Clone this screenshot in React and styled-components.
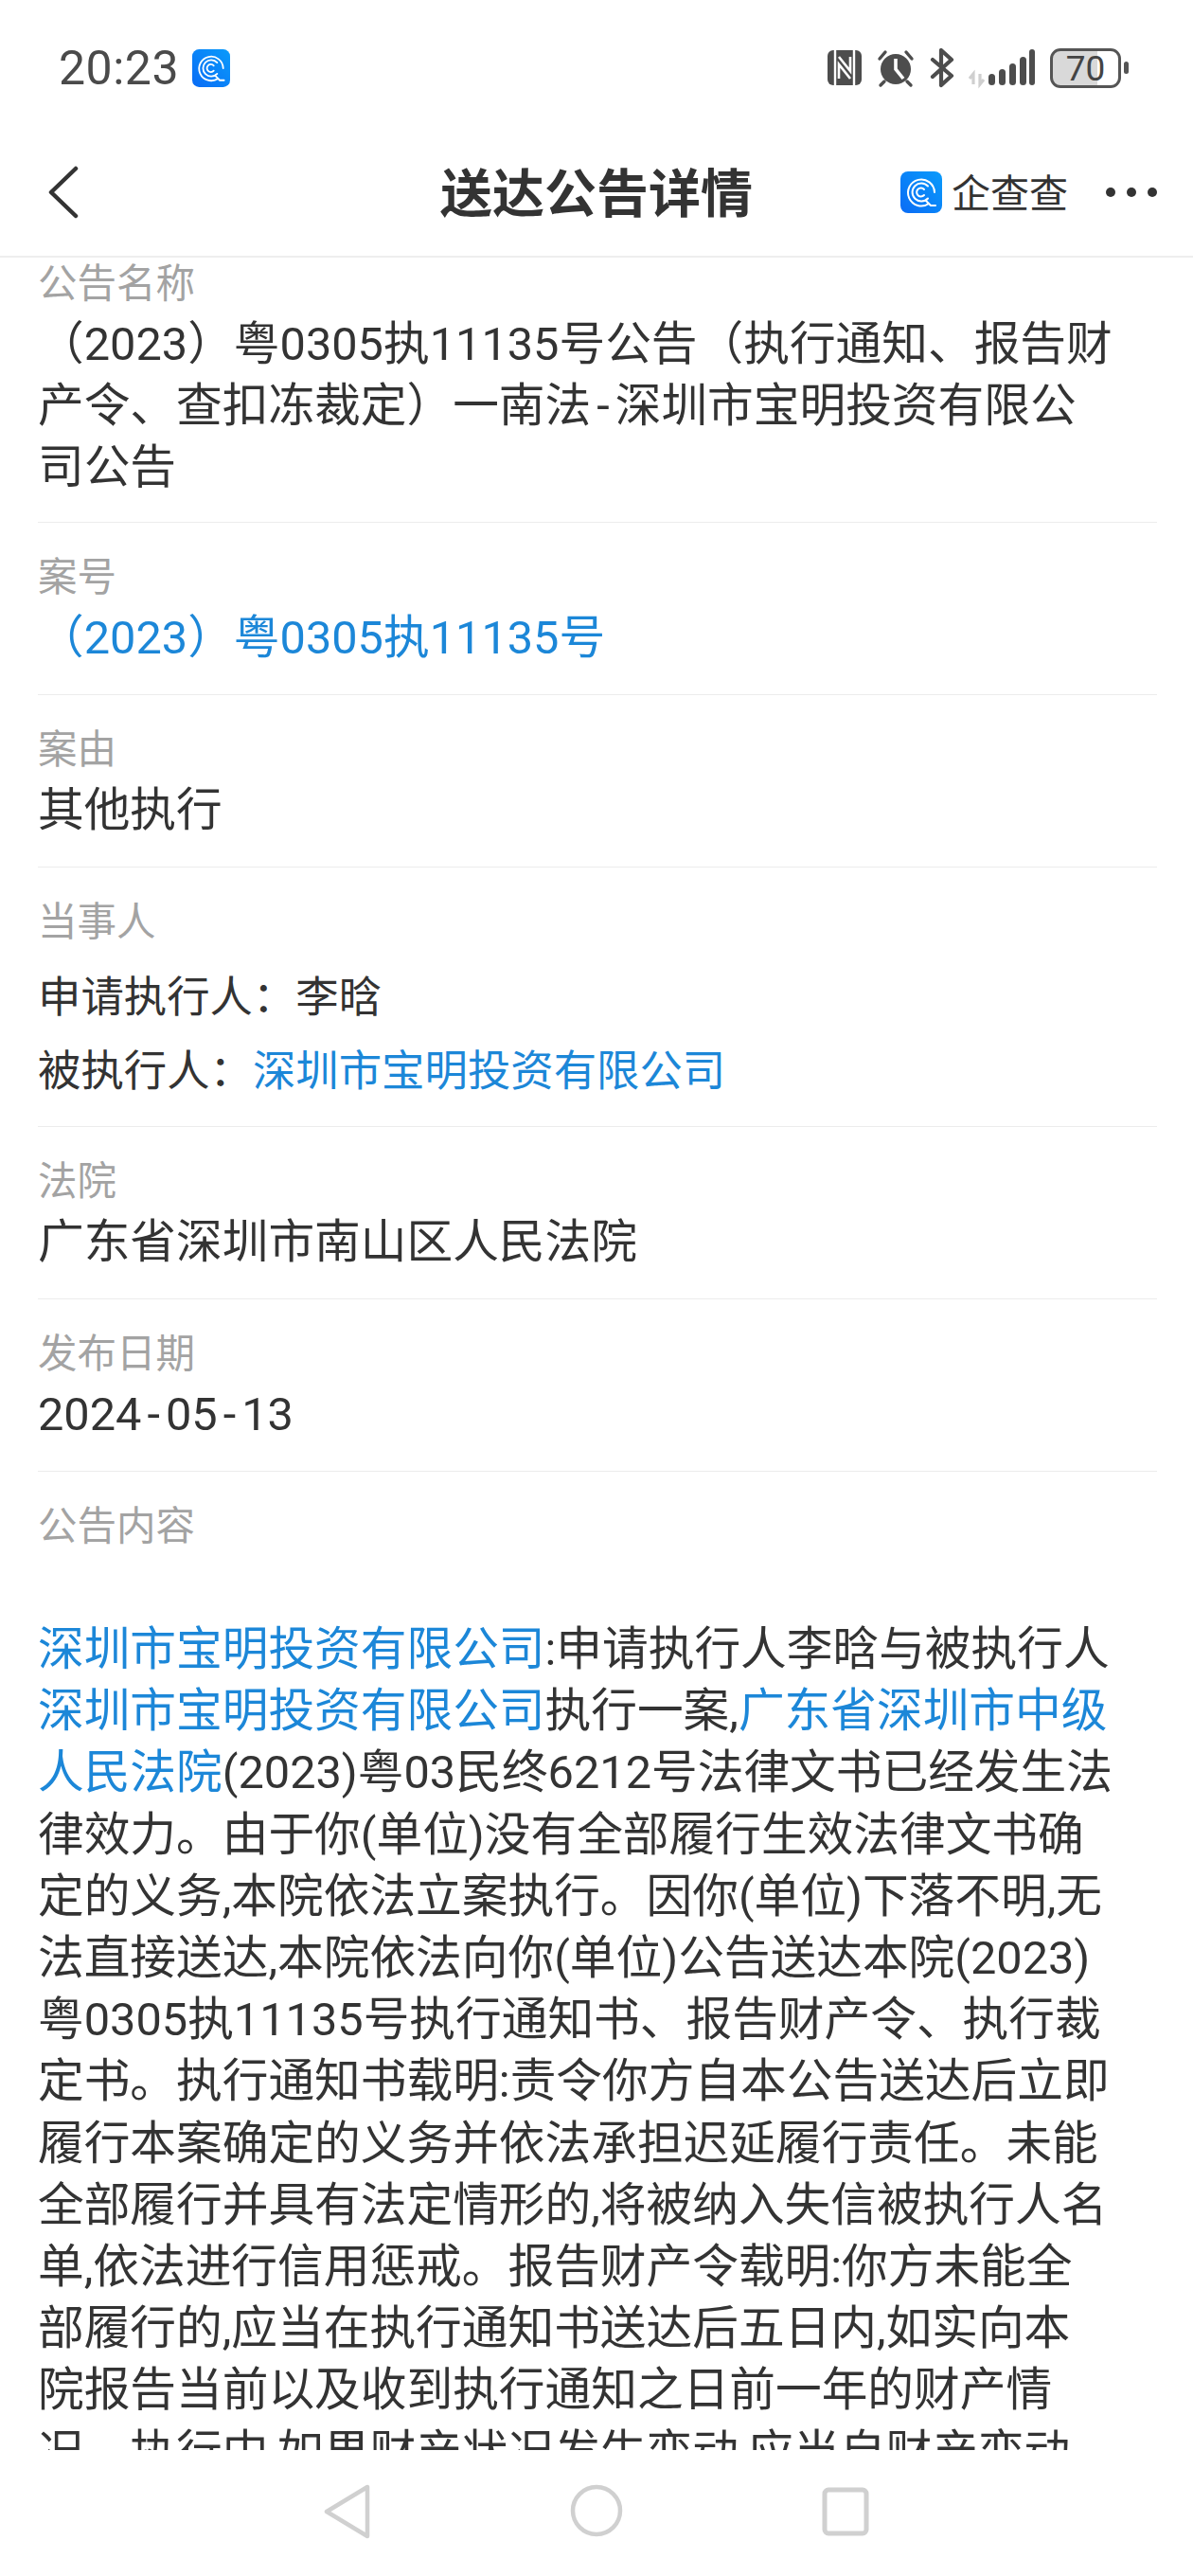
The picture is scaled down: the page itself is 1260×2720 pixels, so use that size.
import React from 'react';
import styled, { createGlobalStyle } from 'styled-components';

const Global = createGlobalStyle`
  html, body { margin: 0; padding: 0; background: #fff; }
  body { font-family: "Roboto", "Noto Sans CJK SC", "Noto Sans", sans-serif; }
`;

const Phone = styled.div`
  width: 1260px;
  height: 2720px;
  display: flex;
  flex-direction: column;
  overflow: hidden;
  background: #fff;
`;

const StatusBar = styled.div`
  height: 136px;
  flex: none;
  box-sizing: border-box;
  padding: 51px 68px 0 62px;
  display: flex;
  align-items: flex-start;
  justify-content: space-between;
`;

const StatusLeft = styled.div`
  display: flex;
  align-items: center;
  gap: 14px;
`;

const Time = styled.span`
  font-size: 50px;
  line-height: 42px;
  color: #4a4a4a;
  letter-spacing: 0.5px;
`;

const StatusRight = styled.div`
  display: flex;
  align-items: flex-start;
  height: 44px;
`;

const TitleBar = styled.header`
  height: 136px;
  flex: none;
  box-sizing: border-box;
  border-bottom: 2px solid #eeeeee;
  padding: 0 37px 0 50px;
  display: flex;
  align-items: center;
  position: relative;
`;

const Title = styled.h1`
  position: absolute;
  left: 0;
  right: 0;
  top: 34px;
  margin: 0;
  text-align: center;
  font-family: "Noto Sans CJK SC", sans-serif;
  font-size: 55px;
  line-height: 60px;
  font-weight: 700;
  color: #333;
  pointer-events: none;
`;

const Brand = styled.div`
  margin-left: auto;
  margin-right: 39px;
  display: flex;
  align-items: center;
  gap: 10px;
`;

const BrandName = styled.span`
  font-family: "Noto Sans CJK SC", sans-serif;
  font-size: 41px;
  line-height: 44px;
  color: #333;
  margin-bottom: 5px;
`;

const Scroller = styled.main`
  flex: 1;
  min-height: 0;
  overflow: hidden;
  padding: 0 38px 0 40px;
`;

const Inner = styled.div`
  margin-top: -5px;
`;

const Section = styled.section`
  padding: ${p => p.$top ?? 26}px 0 ${p => p.$bottom ?? 27}px;
  border-bottom: ${p => (p.$last ? 'none' : '1px solid #ececec')};
`;

const Label = styled.div`
  font-size: 41.5px;
  line-height: 63px;
  color: #a3a3a3;
`;

const Value = styled.div`
  font-size: 48.7px;
  line-height: 65px;
  color: #333;
  white-space: nowrap;
`;

const LinkValue = styled(Value)`
  color: #1c87d8;
`;

const Parties = styled.div`
  margin-top: 10px;
`;

const Party = styled.div`
  font-size: 45.4px;
  line-height: 78px;
  color: #333;
  white-space: nowrap;
`;

const A = styled.span`
  color: #1c87d8;
`;

// the hyphen is drawn wider in the original font
const Hyphen = styled.span`
  padding: 0 6px;
`;

const Body = styled.div`
  margin-top: 66px;
  font-size: 48.7px;
  line-height: 65.2px;
  color: #333;
`;

const Line = styled.div`
  white-space: nowrap;
`;

const NavBar = styled.nav`
  height: 133px;
  flex: none;
  background: #fff;
  display: grid;
  grid-template-columns: repeat(3, 263px);
  justify-content: center;
  justify-items: center;
  align-items: start;
  padding-top: 36px;
  box-sizing: border-box;
`;

const AppLogo = ({ size = 40 }) => (
  <svg width={size} height={size} viewBox="0 0 44 44">
    <defs>
      <linearGradient id="lg" x1="0" y1="1" x2="1" y2="0">
        <stop offset="0" stopColor="#0a6cf5" />
        <stop offset="1" stopColor="#0a9bfb" />
      </linearGradient>
    </defs>
    <rect width="44" height="44" rx="8" fill="url(#lg)" />
    <g fill="none" stroke="#fff" strokeLinecap="round" strokeWidth="2">
      <path d="M30 34 A14 14 0 1 1 36 22" />
      <path d="M29 15.5 A9.5 9.5 0 1 0 29 28.5" />
      <path d="M25 19 A4.5 4.5 0 1 0 25 25" />
      <path d="M27 31 L32 36 L37 36" />
    </g>
  </svg>
);

const StatusIcons = () => (
  <svg width="235" height="44" viewBox="0 0 235 44">
    {/* nfc */}
    <rect x="0" y="2" width="36" height="37" rx="6" fill="#4d4d4d" />
    <path d="M8 2 V39 M28 2 V39" stroke="#fff" strokeWidth="2.4" />
    <path d="M12 9 L24 24 V9 M24 32 L12 17 V32" stroke="#fff" strokeWidth="2.6" fill="none" />
    {/* alarm */}
    <circle cx="72" cy="22" r="16" fill="#4d4d4d" />
    <path d="M72 11 V22 L80 32" stroke="#fff" strokeWidth="3.6" fill="none" />
    <path d="M55 11 L61 4 M83 4 L89 11 M60 35 L56 39 M84 35 L88 39" stroke="#4d4d4d" strokeWidth="3.4" strokeLinecap="round" />
    {/* bluetooth */}
    <path d="M111 12 L131 29 L120 39 V2 L131 12 L111 30" stroke="#4d4d4d" strokeWidth="4.2" strokeLinecap="round" strokeLinejoin="round" fill="none" />
    {/* data arrows */}
    <path d="M154 38 V27 L150 32 M161 27 V38 L165 33" stroke="#cfcfcf" strokeWidth="3.2" fill="none" />
    {/* signal */}
    <rect x="170" y="27" width="7" height="12" rx="3.5" fill="#4d4d4d" />
    <rect x="181" y="22" width="7" height="17" rx="3.5" fill="#4d4d4d" />
    <rect x="192" y="16" width="7" height="23" rx="3.5" fill="#4d4d4d" />
    <rect x="203" y="9" width="7" height="30" rx="3.5" fill="#4d4d4d" />
    <rect x="213" y="1" width="6" height="38" rx="3" fill="#4d4d4d" />
  </svg>
);

const BatteryBox = styled.div`
  width: 75px;
  height: 42px;
  box-sizing: border-box;
  border: 3px solid #555;
  border-radius: 11px;
  overflow: hidden;
  display: flex;
  align-items: center;
  justify-content: center;
  font-size: 37px;
  color: #444;
  background: linear-gradient(90deg, #d9d9d9 0 68%, #fff 68%);
`;

const BatteryCap = styled.div`
  width: 5px;
  height: 13px;
  border-radius: 2.5px;
  background: #555;
  margin: 14px 0 0 3px;
`;

const Chevron = () => (
  <svg width="34" height="56" viewBox="0 0 34 56">
    <path d="M30 3 L4 28 L30 53" fill="none" stroke="#333" strokeWidth="4.5" strokeLinecap="round" strokeLinejoin="round" />
  </svg>
);

const Dots = () => (
  <svg width="56" height="12" viewBox="0 0 56 12">
    <circle cx="6" cy="6" r="5" fill="#333" />
    <circle cx="28" cy="6" r="5" fill="#333" />
    <circle cx="50" cy="6" r="5" fill="#333" />
  </svg>
);

const NavBack = () => (
  <svg width="50" height="58" viewBox="0 0 50 58">
    <path d="M46 3 V55 L3 29 Z" fill="none" stroke="#d0d0d0" strokeWidth="4.5" strokeLinejoin="round" />
  </svg>
);

const NavHome = () => (
  <svg width="56" height="56" viewBox="0 0 56 56">
    <circle cx="28" cy="28" r="25" fill="none" stroke="#d0d0d0" strokeWidth="4.5" />
  </svg>
);

const NavRecent = () => (
  <svg width="50" height="52" viewBox="0 0 50 52" style={{ marginTop: 3 }}>
    <rect x="3" y="3" width="44" height="46" rx="4" fill="none" stroke="#d0d0d0" strokeWidth="5" />
  </svg>
);

export default function App() {
  return (
    <Phone>
      <Global />
      <StatusBar>
        <StatusLeft>
          <Time>20:23</Time>
          <AppLogo size={40} />
        </StatusLeft>
        <StatusRight>
          <StatusIcons />
          <BatteryBox>70</BatteryBox>
          <BatteryCap />
        </StatusRight>
      </StatusBar>
      <TitleBar>
        <Chevron />
        <Title>送达公告详情</Title>
        <Brand>
          <AppLogo size={44} />
          <BrandName>企查查</BrandName>
        </Brand>
        <Dots />
      </TitleBar>
      <Scroller>
        <Inner>
          <Section $top={1} $bottom={25}>
            <Label>公告名称</Label>
            <Value>（2023）粤0305执11135号公告（执行通知、报告财</Value>
            <Value>产令、查扣冻裁定）一南法<Hyphen>-</Hyphen>深圳市宝明投资有限公</Value>
            <Value>司公告</Value>
          </Section>
          <Section>
            <Label>案号</Label>
            <LinkValue>（2023）粤0305执11135号</LinkValue>
          </Section>
          <Section>
            <Label>案由</Label>
            <Value>其他执行</Value>
          </Section>
          <Section $bottom={18}>
            <Label>当事人</Label>
            <Parties>
              <Party>申请执行人：李晗</Party>
              <Party>被执行人：<A>深圳市宝明投资有限公司</A></Party>
            </Parties>
          </Section>
          <Section>
            <Label>法院</Label>
            <Value>广东省深圳市南山区人民法院</Value>
          </Section>
          <Section>
            <Label>发布日期</Label>
            <Value>2024<Hyphen>-</Hyphen>05<Hyphen>-</Hyphen>13</Value>
          </Section>
          <Section $last>
            <Label>公告内容</Label>
            <Body>
              <Line><A>深圳市宝明投资有限公司</A>:申请执行人李晗与被执行人</Line>
              <Line><A>深圳市宝明投资有限公司</A>执行一案,<A>广东省深圳市中级</A></Line>
              <Line><A>人民法院</A>(2023)粤03民终6212号法律文书已经发生法</Line>
              <Line>律效力。由于你(单位)没有全部履行生效法律文书确</Line>
              <Line>定的义务,本院依法立案执行。因你(单位)下落不明,无</Line>
              <Line>法直接送达,本院依法向你(单位)公告送达本院(2023)</Line>
              <Line>粤0305执11135号执行通知书、报告财产令、执行裁</Line>
              <Line>定书。执行通知书载明:责令你方自本公告送达后立即</Line>
              <Line>履行本案确定的义务并依法承担迟延履行责任。未能</Line>
              <Line>全部履行并具有法定情形的,将被纳入失信被执行人名</Line>
              <Line>单,依法进行信用惩戒。报告财产令载明:你方未能全</Line>
              <Line>部履行的,应当在执行通知书送达后五日内,如实向本</Line>
              <Line>院报告当前以及收到执行通知之日前一年的财产情</Line>
              <Line>况。执行中,如果财产状况发生变动,应当自财产变动</Line>
            </Body>
          </Section>
        </Inner>
      </Scroller>
      <NavBar>
        <NavBack />
        <NavHome />
        <NavRecent />
      </NavBar>
    </Phone>
  );
}
